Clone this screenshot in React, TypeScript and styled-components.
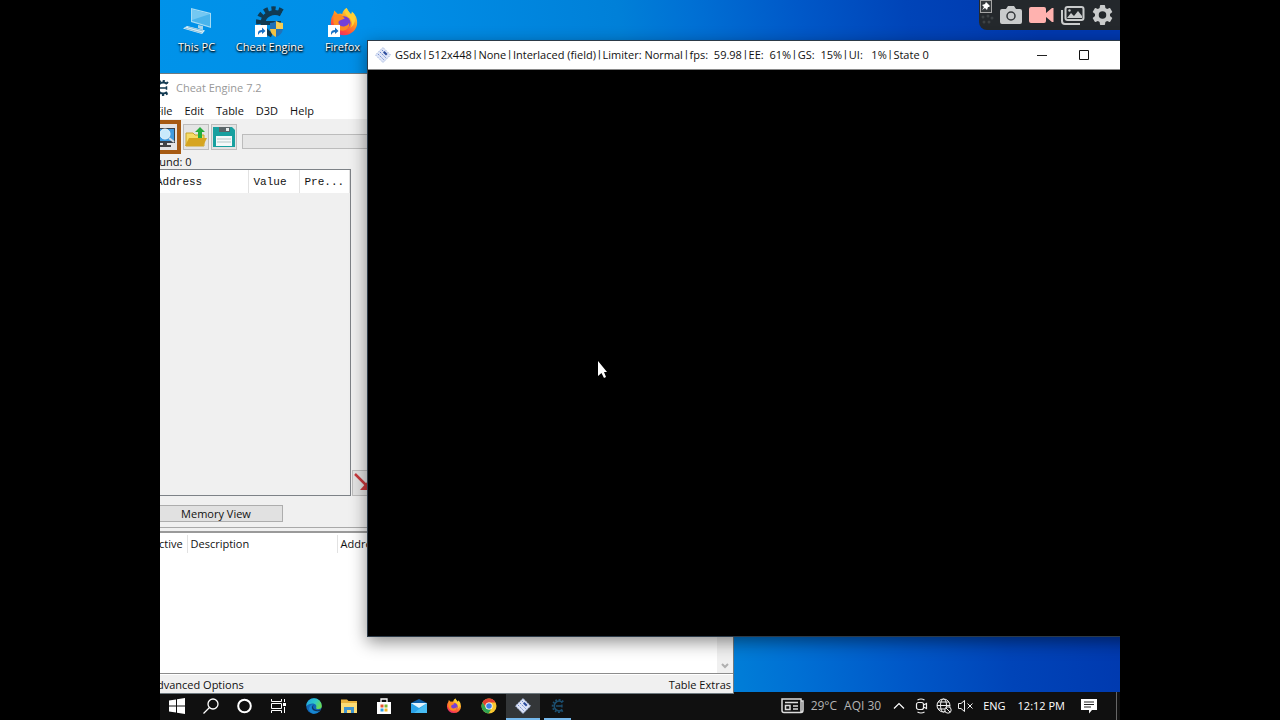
import React from "react";
import styled, { createGlobalStyle } from "styled-components";

const GlobalStyle = createGlobalStyle`
  * { box-sizing: border-box; }
  body {
    margin: 0;
    background: #000;
    font-family: "Open Sans", "Noto Sans", sans-serif;
    font-size: 11px;
    line-height: 16px;
    color: #111;
  }
  button {
    font: inherit;
    color: inherit;
    padding: 0;
    border: 0;
    background: none;
  }
  svg { display: block; flex: none; }
`;

const Desktop = styled.main`
  position: relative;
  display: flex;
  flex-direction: column;
  width: 75%;
  height: 100vh;
  margin: 0 auto;
  overflow: hidden;
  background: linear-gradient(81deg, #0094ea 0%, #008fe8 30%, #0080d8 53%, #0070d4 60%, #0058c8 70%, #0044b8 80%, #0038ae 92%);
`;

const Shortcuts = styled.nav`
  display: flex;
  flex: 1;
  align-items: flex-start;
  padding-top: 5px;
`;

const Shortcut = styled.a`
  display: flex;
  flex-direction: column;
  align-items: center;
  width: 73px;
  color: #fff;
  text-decoration: none;
  white-space: nowrap;
  text-shadow: 0 1px 2px #000, 1px 1px 2px #000;
`;

/* ---------- Capture overlay ---------- */

const CaptureBar = styled.div`
  position: absolute;
  top: 0;
  right: 0;
  display: flex;
  align-items: center;
  gap: 6px;
  height: 30px;
  padding-right: 6px;
  border-bottom-left-radius: 8px;
  background: #24282c;
`;

const CaptureHandle = styled.div`
  align-self: flex-start;
  width: 14px;
`;

const CaptureButton = styled.button`
  display: flex;
`;

/* ---------- Cheat Engine window ---------- */

const EngineWindow = styled.section`
  position: absolute;
  top: 73px;
  bottom: 26px;
  left: -14px;
  z-index: 1;
  display: flex;
  flex-direction: column;
  width: 588px;
  border: 1px solid #6f7a80;
  background: #f0f0f0;
  white-space: nowrap;
`;

const EngineTitle = styled.header`
  display: flex;
  align-items: center;
  gap: 6px;
  height: 28px;
  padding-left: 7px;
  background: #fff;
  color: #999;
`;

const MenuBar = styled.nav`
  display: flex;
  gap: 12px;
  height: 17px;
  padding-left: 8px;
  background: #fff;
`;

const ToolRow = styled.div`
  display: flex;
  align-items: center;
  gap: 2px;
  height: 35px;
`;

const ToolButton = styled.button<{ $framed?: boolean }>`
  display: flex;
  align-items: center;
  justify-content: center;
  width: ${(p) => (p.$framed ? 34 : 26)}px;
  height: ${(p) => (p.$framed ? 34 : 26)}px;
  border: ${(p) => (p.$framed ? "4px solid #a65a12" : "1px solid #bdbdbd")};
  background: #e4e4e4;
`;

const ScanProgress = styled.div`
  flex: 1;
  height: 15px;
  margin: 10px 8px 0 3px;
  border: 1px solid #bcbcbc;
  background: #e6e6e6;
`;

const FoundLabel = styled.div`
  height: 15px;
  line-height: 16px;
`;

const ResultArea = styled.div`
  display: flex;
  align-items: flex-end;
  flex: 1;
  gap: 1px;
`;

const ResultList = styled.div`
  align-self: stretch;
  width: 204px;
  border: 1px solid #7d8287;
`;

const Table = styled.table<{ $mono?: boolean }>`
  width: 100%;
  table-layout: fixed;
  border-collapse: collapse;
  background: #fff;
  font-family: ${(p) => (p.$mono ? '"Liberation Mono", monospace' : "inherit")};
`;

const HeadCell = styled.th<{ $width?: number; $tall?: boolean; $indent?: number }>`
  width: ${(p) => (p.$width ? `${p.$width}px` : "auto")};
  height: ${(p) => (p.$tall ? 23 : 18)}px;
  padding: 0 0 0 ${(p) => p.$indent ?? (p.$tall ? 5 : 3)}px;
  border-right: 1px solid #e2e2e2;
  font-weight: 400;
  text-align: left;
`;

const MemoryButton = styled.button`
  width: 134px;
  height: 17px;
  margin: 9px 0 5px 2px;
  border: 1px solid #adadad;
  background: #e1e1e1;
  line-height: 15px;
`;

const Splitter = styled.div`
  height: 6px;
  border-top: 1px solid #a9a9a9;
  border-bottom: 2px solid #9a9a9a;
`;

const AddressList = styled.div`
  display: flex;
  height: 141px;
  padding-top: 2px;
  border-bottom: 1px solid #8c8c8c;
  background: #fff;
`;

const AddressTable = styled.div`
  flex: 1;
`;

const ScrollTrack = styled.div`
  display: flex;
  align-items: flex-end;
  justify-content: center;
  width: 16px;
  padding-bottom: 4px;
  background: #f0f0f0;
`;

const EngineFooter = styled.footer`
  display: flex;
  justify-content: space-between;
  height: 19px;
  padding: 2px 2px 0 3px;
  border-top: 1px solid #fff;
`;

const PlainButton = styled.button`
  line-height: 16px;
`;

/* ---------- Emulator window ---------- */

const GameWindow = styled.section`
  position: absolute;
  top: 40px;
  right: -28px;
  bottom: 83px;
  left: 207px;
  z-index: 2;
  display: flex;
  flex-direction: column;
  border: 1px solid #2c3a48;
  background: #000;
  box-shadow: 0 5px 16px rgba(0, 0, 0, 0.45);
`;

const GameTitle = styled.header`
  display: flex;
  align-items: center;
  height: 29px;
  padding-left: 7px;
  border-bottom: 1px solid #8a8a8a;
  background: #fff;
`;

const GameCaption = styled.h1`
  display: flex;
  flex: 1;
  gap: 1px;
  margin: 0 0 0 4px;
  font-size: 11px;
  font-weight: 400;
  white-space: pre;
`;

const Divider = styled.span`
  padding: 0 1px;
  font-family: Roboto, sans-serif;
`;

const WindowButton = styled.button`
  display: flex;
  align-items: center;
  justify-content: center;
  width: 42px;
  height: 27px;
`;

const Pointer = styled.div`
  position: absolute;
  top: 320px;
  left: 229px;
`;

/* ---------- Taskbar ---------- */

const Taskbar = styled.footer`
  display: flex;
  align-items: stretch;
  height: 28px;
  background: #101010;
  color: #fff;
`;

const TaskButton = styled.button<{ $wide?: boolean; $active?: boolean }>`
  display: flex;
  align-items: center;
  justify-content: center;
  width: ${(p) => (p.$wide ? 35 : 34)}px;
  background: ${(p) => (p.$active ? "#333638" : "transparent")};
  box-shadow: ${(p) => (p.$active ? "inset 0 -2px #76b9ed" : "none")};
`;

const RunningTask = styled.button`
  display: flex;
  align-items: center;
  justify-content: center;
  width: 27px;
  margin-left: 4px;
  box-shadow: inset 0 -2px #76b9ed;
`;

const Tray = styled.div`
  display: flex;
  align-items: center;
  gap: 6px;
  margin-left: auto;
  padding-right: 3px;
  white-space: nowrap;
`;

const Weather = styled.button`
  display: flex;
  align-items: center;
  gap: 7px;
  color: #b4b4b4;
  font-size: 12px;
`;

const TrayButton = styled.button<{ $gap?: number }>`
  margin-left: ${(p) => p.$gap ?? 0}px;
`;

const ShowDesktop = styled.div`
  align-self: stretch;
  width: 1px;
  margin-left: 13px;
  background: #666;
`;

/* ---------- Drawings ---------- */

const PcIcon = () => (
  <svg width="34" height="34" viewBox="0 0 34 34">
    <path d="M11 3 31 8v15L11 17z" fill="#a5dcf5" />
    <path d="M12 4.500 30 9v12.500L12 16z" fill="#49b4ec" />
    <path d="M12 4.500 30 9 12 15z" fill="#74c8f2" />
    <path d="M18 20l5 1v4l-5-2z" fill="#a9d4e8" />
    <path d="M7 21 25 25.500 22 29 3 23.500z" fill="#d5eefa" />
    <path d="M8 22l15 4M5 23l17 5" stroke="#8fc0d8" />
  </svg>
);

const GearMark = ({ size, color }: { size: number; color: string }) => (
  <svg width={size} height={size} viewBox="0 0 32 32" fill="none" stroke={color}>
    <path d="M28 6.500A14 14 0 1 0 28 25.500" strokeWidth="4" strokeDasharray="4 3.500" />
    <path d="M26 8A11 11 0 1 0 26 24" strokeWidth="4" />
    <path d="M11 16h14M25 16v-3.500M25 16v3.500" strokeWidth="3" />
  </svg>
);

const ShortcutArrow = ({ x = 0 }: { x?: number }) => (
  <g transform={`translate(${x} 20)`}>
    <rect width="12" height="12" fill="#fff" />
    <path d="M3 10V8q0-3 4-3V2.500L10.500 6 7 9V7Q4.500 7 3 10z" fill="#1670c4" />
  </g>
);

const EngineIcon = () => (
  <svg width="34" height="34" viewBox="0 0 34 34">
    <g fill="none" stroke="#103a52">
      <path d="M29 7Q23 3 16 5 7 8 6 16q0 10 10 14" strokeWidth="6" strokeDasharray="4 3" />
      <path d="M28 9Q22 6 16 9q-6 3-6 9 0 8 9 12" strokeWidth="5" />
      <path d="M11 18h17" strokeWidth="4" />
    </g>
    <path d="M17 18q4 0 6-2v8h-6z" fill="#1e70b6" />
    <path d="M23 16q3 2 7 2v6h-7z" fill="#f5cd53" />
    <path d="M17 24h6v8q-5-2-6-8z" fill="#f0c244" />
    <path d="M23 24h7q-1 6-7 8z" fill="#2272b8" />
    <ShortcutArrow x={2} />
  </svg>
);

const FoxArt = ({ id }: { id: string }) => (
  <>
    <defs>
      <linearGradient id={id} x1="0.8" y1="0" x2="0.2" y2="1">
        <stop offset="0" stopColor="#fff04a" />
        <stop offset="0.4" stopColor="#ff9a23" />
        <stop offset="0.75" stopColor="#ff4a3e" />
        <stop offset="1" stopColor="#e0247e" />
      </linearGradient>
    </defs>
    <path d="M20 1q1 4 5 7 1-1 1-3 6 5 6 13a15 14 0 0 1-30 0Q2 12 5 8l1-4 4 4q3-1 5 0 1-5 5-7z" fill={`url(#${id})`} />
    <circle cx="17" cy="18" r="7.500" fill="#7540d8" />
    <path d="M5 12q3-5 9-3l4 4-5 2q-3 1-2 4 2 4 7 3 4-1 5-4 1 8-7 9-9 0-11-9z" fill="#ff8b21" />
    <path d="M18 4q0 5 6 9 4 6 0 11 9-7 4-17l-3 2-5-8z" fill="#ffd034" />
  </>
);

const FirefoxShortcutIcon = () => (
  <svg width="34" height="34" viewBox="0 0 34 34">
    <g transform="translate(3 2) scale(0.88)">
      <FoxArt id="foxLarge" />
    </g>
    <ShortcutArrow x={2} />
  </svg>
);

const FirefoxIcon = () => (
  <svg width="16" height="16" viewBox="0 0 34 34">
    <FoxArt id="foxSmall" />
  </svg>
);

const PinHandle = () => (
  <svg width="16" height="30" viewBox="0 0 16 30">
    <rect x="1.500" y="0.500" width="11" height="12" fill="#34383b" stroke="#a5a5a5" />
    <path d="M7 2l4 4-1 1-1 0-1 3-2-2-3 2 2-3-2-2 3-1z" fill="#fff" />
    <g fill="#3d4245">
      <circle cx="4" cy="17" r="1.500" /><circle cx="9" cy="16" r="1.500" /><circle cx="13" cy="18" r="1.500" />
      <circle cx="5" cy="22" r="1.500" /><circle cx="10" cy="22" r="1.500" />
    </g>
  </svg>
);

const CameraIcon = () => (
  <svg width="24" height="22" viewBox="0 0 24 22">
    <path d="M3 5h4l2-3h6l2 3h4q2 0 2 2v11q0 2-2 2H3q-2 0-2-2V7q0-2 2-2z" fill="#c9cbcc" />
    <circle cx="12" cy="12" r="4" fill="none" stroke="#33373a" strokeWidth="1.500" />
  </svg>
);

const VideoIcon = () => (
  <svg width="25" height="22" viewBox="0 0 25 22">
    <path d="M2 3h13q2 0 2 2v4l6-5h1.500v14H23l-6-5v4q0 2-2 2H2q-2 0-2-2V5q0-2 2-2z" fill="#ffb2af" />
  </svg>
);

const GalleryIcon = () => (
  <svg width="25" height="22" viewBox="0 0 25 22" fill="none" stroke="#c9cbcc" strokeWidth="2">
    <rect x="5.500" y="3" width="18" height="13" rx="2" />
    <path d="M2 6v11q0 3 3 3h15" />
    <path d="M7 14l4-5 3 3 4-5 4 5v2z" fill="#c9cbcc" stroke="none" />
    <circle cx="9.500" cy="6.500" r="1.200" fill="#c9cbcc" stroke="none" />
  </svg>
);

const SettingsIcon = () => (
  <svg width="23" height="24" viewBox="1 1 22 22">
    <path
      fill="#c9cbcc"
      d="M19.140 12.940c.04-.3.06-.61.06-.94s-.02-.64-.07-.94l2.030-1.580a.49.49 0 0 0 .12-.61l-1.920-3.320a.49.49 0 0 0-.59-.22l-2.390.96a7 7 0 0 0-1.620-.94l-.36-2.540a.48.48 0 0 0-.48-.41h-3.840a.48.48 0 0 0-.47.41l-.36 2.540c-.59.24-1.130.57-1.620.94l-2.390-.96a.48.48 0 0 0-.59.22L2.740 8.870a.47.47 0 0 0 .12.61l2.030 1.580c-.05.3-.09.63-.09.94s.02.64.07.94l-2.030 1.580a.49.49 0 0 0-.12.61l1.920 3.320c.12.22.37.29.59.22l2.390-.96c.5.38 1.030.7 1.620.94l.36 2.540c.05.24.24.41.48.41h3.840c.24 0 .44-.17.47-.41l.36-2.540a7 7 0 0 0 1.620-.94l2.390.96c.22.08.47 0 .59-.22l1.920-3.320a.47.47 0 0 0-.12-.61zM12 15.600a3.600 3.600 0 1 1 0-7.200 3.600 3.600 0 0 1 0 7.200z"
    />
  </svg>
);

const ScanIcon = () => (
  <svg width="26" height="24" viewBox="0 0 26 24">
    <path d="M2 3h22v15H2z" fill="#3a4148" />
    <path d="M3 4h20v12H3z" fill="#3d9be0" />
    <circle cx="14" cy="9" r="5" fill="#c8eafc" stroke="#e9f5fa" />
    <path d="M18 13l5 4" stroke="#d6dde2" strokeWidth="2" />
    <path d="M12 18h4v2h4v2H8v-2h4z" fill="#444" />
  </svg>
);

const OpenIcon = () => (
  <svg width="24" height="24" viewBox="0 0 24 24">
    <path d="M2 8h7l2 2h9v11H2z" fill="#f7dc66" stroke="#c8a42c" />
    <path d="M5 13h18l-4 8H1z" fill="#d6a520" />
    <path d="M16 2l5 5h-3v6h-4V7h-3z" fill="#27ad3f" />
  </svg>
);

const SaveIcon = () => (
  <svg width="24" height="24" viewBox="0 0 24 24">
    <path d="M1 2h19l3 3v17H1z" fill="#17a09f" />
    <path d="M7 2h11v5H7z" fill="#5b6669" />
    <path d="M14 3h3v3h-3z" fill="#e8eeee" />
    <path d="M4 11h16v10H4z" fill="#f4f9f9" />
    <path d="M5 14h14M5 17h14" stroke="#b3c7c7" />
  </svg>
);

const RedArrow = () => (
  <svg width="24" height="24" viewBox="0 0 24 24">
    <path d="M2 3l11 11" stroke="#c93a3e" strokeWidth="2.500" />
    <path d="M15 10v9H7z" fill="#c93a3e" />
  </svg>
);

const ChevronDown = () => (
  <svg width="8" height="6" viewBox="0 0 8 6" fill="none" stroke="#b0b0b0" strokeWidth="2">
    <path d="M1 1l3 3 3-3" />
  </svg>
);

const PluginIcon = ({ size }: { size: number }) => (
  <svg width={size} height={size} viewBox="0 0 16 16">
    <path d="M8 0.500 15.500 8 8 15.500.500 8z" fill="#dfe5f7" stroke="#a9bbe0" strokeDasharray="2 1" />
    <path d="M9.500 4l3 3-1.500 1.500-3-3z" fill="#2c4c9c" />
    <path d="M5 5l6 6M3 7l6 6M7 3l2 2" stroke="#6f8ccd" strokeDasharray="1.500 1" />
  </svg>
);

const Arrow = () => (
  <svg width="13" height="19" viewBox="0 0 13 19">
    <path d="M1 0v15l3.500-3 2.500 5 2-1-2-5H10z" fill="#fff" />
  </svg>
);

const StartIcon = () => (
  <svg width="16" height="16" viewBox="0 0 16 16" fill="#fff">
    <path d="M0 2.500 7 1.500v6H0zM8 1.300 16 0v7.500H8zM0 8.500h7v6L0 13.500zM8 8.500h8V16l-8-1.300z" />
  </svg>
);

const SearchIcon = () => (
  <svg width="16" height="16" viewBox="0 0 16 16" fill="none" stroke="#fff" strokeWidth="1.300">
    <circle cx="10" cy="6" r="5" />
    <path d="M6.500 9.500.500 15.500" />
  </svg>
);

const CortanaIcon = () => (
  <svg width="16" height="16" viewBox="0 0 16 16" fill="none" stroke="#fff" strokeWidth="2">
    <circle cx="7.500" cy="8" r="6.300" />
  </svg>
);

const TaskViewIcon = () => (
  <svg width="16" height="16" viewBox="0 0 16 16" fill="none" stroke="#fff">
    <path d="M0.500 1v2.500h10V1M.500 15v-2.500h10V15M.500 5.500h10v5H.500zM13.500 1v3M13.500 9v6" />
    <path d="M12 5h3v3h-3z" fill="#fff" stroke="none" />
  </svg>
);

const EdgeIcon = () => (
  <svg width="16" height="16" viewBox="0 0 16 16">
    <defs>
      <linearGradient id="edgeTop" x1="0" y1="0" x2="1" y2="0.5">
        <stop offset="0" stopColor="#1f9fe6" />
        <stop offset="0.6" stopColor="#2fc8c8" />
        <stop offset="1" stopColor="#6bdb55" />
      </linearGradient>
    </defs>
    <circle cx="8" cy="8" r="7.800" fill="#1267b8" />
    <path d="M0.200 8A7.800 7.800 0 0 1 15.800 8q0 3-3.500 3-3 0-2-2 .5-3-3-3.500Q3 5 .2 8z" fill="url(#edgeTop)" />
    <path d="M7 6q-3 3 0 6 3 2 7 1-3 3-7 2.700Q3 14 3 10.500 3.500 7 7 6z" fill="#1787d2" />
    <path d="M8 7q-2 2 0 4 3 2 6 .500l1 .5-1 1q-4 1-7-1Q4.500 9 8 7z" fill="#10365c" />
  </svg>
);

const FolderIcon = () => (
  <svg width="16" height="16" viewBox="0 0 16 16">
    <path d="M0 1.500h6l1.500 1.500H16v12H0z" fill="#e9b33d" />
    <path d="M0 5h16v10H0z" fill="#fbdc75" />
    <path d="M3 15V9h10v6h-3v-3H6v3z" fill="#3f94cf" />
  </svg>
);

const StoreIcon = () => (
  <svg width="16" height="16" viewBox="0 0 16 16">
    <path d="M5 4V1h6v3" fill="none" stroke="#fff" strokeWidth="1.300" />
    <path d="M1 4h14v12H1z" fill="#fff" />
    <path d="M4.500 6.500h3v3h-3z" fill="#e6502c" />
    <path d="M8.500 6.500h3v3h-3z" fill="#7db52e" />
    <path d="M4.500 10.500h3v3h-3z" fill="#2f9ee4" />
    <path d="M8.500 10.500h3v3h-3z" fill="#f2b525" />
  </svg>
);

const MailIcon = () => (
  <svg width="16" height="16" viewBox="0 0 16 16">
    <path d="M0 5l8-4 8 4v3H0z" fill="#0d5fa8" />
    <path d="M0 5h16v10H0z" fill="#2aa2e8" />
    <path d="M16 5v10H3z" fill="#48bdf4" />
    <path d="M0 5h16L8 10z" fill="#e3f3fc" />
  </svg>
);

const ChromeIcon = () => (
  <svg width="16" height="16" viewBox="0 0 16 16">
    <circle cx="8" cy="8" r="7.500" fill="#f9c62f" />
    <path d="M1.500 4.200A7.500 7.500 0 0 1 14.500 4.400H8A3.600 3.600 0 0 0 4.900 9.800z" fill="#e34133" />
    <path d="M1.500 4.200 4.900 9.800Q6 11.600 8 11.600h2L7.500 15.500A7.500 7.500 0 0 1 1.500 4.200z" fill="#30a452" />
    <circle cx="8" cy="8" r="3.600" fill="#fff" />
    <circle cx="8" cy="8" r="2.800" fill="#3f7fe8" />
  </svg>
);

const NewsIcon = () => (
  <svg width="23" height="16" viewBox="0 0 23 16" fill="none" stroke="#ddd" strokeWidth="1.500">
    <path d="M20 3h2v9q0 2.500-2 2.500H3q-2 0-2-2V1h19v13" />
    <path d="M4 4.500h13M12 8h5M12 11h5M4.500 7.500h4.500v4H4.500z" />
  </svg>
);

const ChevronUp = () => (
  <svg width="12" height="8" viewBox="0 0 12 8" fill="none" stroke="#fff" strokeWidth="1.200">
    <path d="M1 6.500 6 1.500l5 5" />
  </svg>
);

const MeetIcon = () => (
  <svg width="13" height="16" viewBox="0 0 13 16" fill="none" stroke="#eee" strokeWidth="1.200">
    <rect x="1.500" y="4.500" width="7" height="7" rx="2" />
    <path d="M8.500 7l3-1.500v5l-3-1.500M2.500 2q3.500-2 7 0M2.500 14q3.500 2 7 0" />
  </svg>
);

const GlobeIcon = () => (
  <svg width="16" height="16" viewBox="0 0 16 16" fill="none" stroke="#eee">
    <circle cx="7.500" cy="7.500" r="6.500" />
    <ellipse cx="7.500" cy="7.500" rx="3" ry="6.500" />
    <path d="M1 7.500h13M2 4h11M2 11h7" />
    <circle cx="12" cy="12" r="3.200" fill="#101010" />
    <path d="M10 10l4 4" />
  </svg>
);

const MuteIcon = () => (
  <svg width="15" height="14" viewBox="0 0 15 14" fill="none" stroke="#eee">
    <path d="M.500 4.500H3l3.500-3v11L3 9.500H.500zM9.500 4.500l5 5M14.500 4.500l-5 5" />
  </svg>
);

const NoticeIcon = () => (
  <svg width="16" height="16" viewBox="0 0 16 16">
    <path d="M0 1h16v11h-5l-3 3.500V12H0z" fill="#fff" />
    <path d="M3 4h10M3 6.500h10M3 9h7" stroke="#222" />
  </svg>
);

const MENU = ["File", "Edit", "Table", "D3D", "Help"];

const STATUS = [
  "GSdx",
  "512x448",
  "None",
  "Interlaced (field)",
  "Limiter: Normal",
  "fps:  59.98",
  "EE:  61%",
  "GS:  15%",
  "UI:   1%",
  "State 0",
];

const PINNED = [
  { label: "Microsoft Edge", icon: <EdgeIcon /> },
  { label: "File Explorer", icon: <FolderIcon /> },
  { label: "Microsoft Store", icon: <StoreIcon /> },
  { label: "Mail", icon: <MailIcon /> },
  { label: "Firefox", icon: <FirefoxIcon /> },
  { label: "Chrome", icon: <ChromeIcon /> },
];

const SYSTEM = [
  { label: "Start", icon: <StartIcon /> },
  { label: "Search", icon: <SearchIcon /> },
  { label: "Cortana", icon: <CortanaIcon /> },
  { label: "Task View", icon: <TaskViewIcon /> },
];

function CheatEngine() {
  return (
    <EngineWindow aria-label="Cheat Engine">
      <EngineTitle>
        <GearMark size={16} color="#123a52" />
        <span>Cheat Engine 7.2</span>
      </EngineTitle>
      <MenuBar>
        {MENU.map((item) => (
          <PlainButton key={item}>{item}</PlainButton>
        ))}
      </MenuBar>
      <ToolRow>
        <ToolButton $framed aria-label="Select process"><ScanIcon /></ToolButton>
        <ToolButton aria-label="Open"><OpenIcon /></ToolButton>
        <ToolButton aria-label="Save"><SaveIcon /></ToolButton>
        <ScanProgress />
      </ToolRow>
      <FoundLabel>Found: 0</FoundLabel>
      <ResultArea>
        <ResultList>
          <Table $mono>
            <thead>
              <tr>
                <HeadCell $tall $width={100} $indent={8}>Address</HeadCell>
                <HeadCell $tall $width={51}>Value</HeadCell>
                <HeadCell $tall>Pre...</HeadCell>
              </tr>
            </thead>
          </Table>
        </ResultList>
        <ToolButton aria-label="Copy to address list"><RedArrow /></ToolButton>
      </ResultArea>
      <MemoryButton>Memory View</MemoryButton>
      <Splitter />
      <AddressList>
        <AddressTable>
          <Table>
            <thead>
              <tr>
                <HeadCell $width={40} $indent={5}>Active</HeadCell>
                <HeadCell $width={150}>Description</HeadCell>
                <HeadCell>Address</HeadCell>
              </tr>
            </thead>
          </Table>
        </AddressTable>
        <ScrollTrack><ChevronDown /></ScrollTrack>
      </AddressList>
      <EngineFooter>
        <PlainButton>Advanced Options</PlainButton>
        <PlainButton>Table Extras</PlainButton>
      </EngineFooter>
    </EngineWindow>
  );
}

function Emulator() {
  return (
    <GameWindow aria-label="GSdx">
      <GameTitle>
        <PluginIcon size={16} />
        <GameCaption>
          {STATUS.map((part, i) => (
            <React.Fragment key={part}>
              {i > 0 && <Divider>|</Divider>}
              <span>{part}</span>
            </React.Fragment>
          ))}
        </GameCaption>
        <WindowButton aria-label="Minimize">
          <svg width="10" height="10" viewBox="0 0 10 10"><path d="M0 5.500h10" stroke="#222" /></svg>
        </WindowButton>
        <WindowButton aria-label="Maximize">
          <svg width="10" height="10" viewBox="0 0 10 10"><path d="M.500.500h9v9h-9z" fill="none" stroke="#111" /></svg>
        </WindowButton>
        <WindowButton aria-label="Close">
          <svg width="10" height="10" viewBox="0 0 10 10"><path d="M0 0l10 10M10 0 0 10" stroke="#111" /></svg>
        </WindowButton>
      </GameTitle>
      <Pointer><Arrow /></Pointer>
    </GameWindow>
  );
}

export default function App() {
  return (
    <>
      <GlobalStyle />
      <Desktop>
        <Shortcuts>
          <Shortcut href="#pc"><PcIcon />This PC</Shortcut>
          <Shortcut href="#engine"><EngineIcon />Cheat Engine</Shortcut>
          <Shortcut href="#firefox"><FirefoxShortcutIcon />Firefox</Shortcut>
        </Shortcuts>
        <CaptureBar>
          <CaptureHandle><PinHandle /></CaptureHandle>
          <CaptureButton aria-label="Screenshot"><CameraIcon /></CaptureButton>
          <CaptureButton aria-label="Record"><VideoIcon /></CaptureButton>
          <CaptureButton aria-label="Gallery"><GalleryIcon /></CaptureButton>
          <CaptureButton aria-label="Settings"><SettingsIcon /></CaptureButton>
        </CaptureBar>
        <CheatEngine />
        <Emulator />
        <Taskbar>
          {SYSTEM.map((t) => (
            <TaskButton key={t.label} aria-label={t.label}>{t.icon}</TaskButton>
          ))}
          {PINNED.map((t) => (
            <TaskButton key={t.label} $wide aria-label={t.label}>{t.icon}</TaskButton>
          ))}
          <TaskButton $active aria-label="GSdx"><PluginIcon size={16} /></TaskButton>
          <RunningTask aria-label="Cheat Engine"><GearMark size={14} color="#1c4f70" /></RunningTask>
          <Tray>
            <Weather><NewsIcon /><span>29°C</span><span>AQI 30</span></Weather>
            <TrayButton $gap={6} aria-label="Show hidden icons"><ChevronUp /></TrayButton>
            <TrayButton $gap={4} aria-label="Meet Now"><MeetIcon /></TrayButton>
            <TrayButton $gap={2} aria-label="Network"><GlobeIcon /></TrayButton>
            <TrayButton aria-label="Volume muted"><MuteIcon /></TrayButton>
            <TrayButton $gap={4}>ENG</TrayButton>
            <TrayButton $gap={6}>12:12 PM</TrayButton>
            <TrayButton $gap={10} aria-label="Notifications"><NoticeIcon /></TrayButton>
            <ShowDesktop />
          </Tray>
        </Taskbar>
      </Desktop>
    </>
  );
}
